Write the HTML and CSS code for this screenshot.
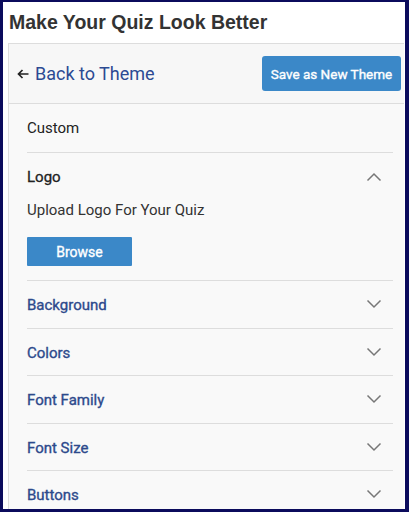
FILE: index.html
```html
<!DOCTYPE html>
<html>
<head>
<meta charset="utf-8">
<link rel="stylesheet" href="styles.css">
</head>
<body>
<div class="frame">
  <h1 class="title">Make Your Quiz Look Better</h1>
  <div class="panel">
    <div class="panel-head">
      <a class="back"><svg class="arrow" width="12" height="10" viewBox="0 0 12 10"><path d="M11.5 5 H1.5 M5.5 1 L1.5 5 L5.5 9" fill="none" stroke="#222" stroke-width="1.7"/></svg>Back to Theme</a>
      <button class="btn save">Save as New Theme</button>
    </div>
    <div class="panel-body">
      <div class="custom">Custom</div>
      <div class="section open">
        <div class="row">
          <span class="label dark">Logo</span>
          <svg class="chev" width="16" height="10" viewBox="0 0 16 10"><path d="M1.5 8.5 L8 2 L14.5 8.5" fill="none" stroke="#777" stroke-width="1.5"/></svg>
        </div>
        <div class="upload">Upload Logo For Your Quiz</div>
        <button class="btn browse">Browse</button>
      </div>
      <div class="section">
        <div class="row"><span class="label">Background</span><svg class="chev" width="16" height="10" viewBox="0 0 16 10"><path d="M1.5 1.5 L8 8 L14.5 1.5" fill="none" stroke="#777" stroke-width="1.5"/></svg></div>
      </div>
      <div class="section">
        <div class="row"><span class="label">Colors</span><svg class="chev" width="16" height="10" viewBox="0 0 16 10"><path d="M1.5 1.5 L8 8 L14.5 1.5" fill="none" stroke="#777" stroke-width="1.5"/></svg></div>
      </div>
      <div class="section">
        <div class="row"><span class="label">Font Family</span><svg class="chev" width="16" height="10" viewBox="0 0 16 10"><path d="M1.5 1.5 L8 8 L14.5 1.5" fill="none" stroke="#777" stroke-width="1.5"/></svg></div>
      </div>
      <div class="section">
        <div class="row"><span class="label">Font Size</span><svg class="chev" width="16" height="10" viewBox="0 0 16 10"><path d="M1.5 1.5 L8 8 L14.5 1.5" fill="none" stroke="#777" stroke-width="1.5"/></svg></div>
      </div>
      <div class="section">
        <div class="row"><span class="label">Buttons</span><svg class="chev" width="16" height="10" viewBox="0 0 16 10"><path d="M1.5 1.5 L8 8 L14.5 1.5" fill="none" stroke="#777" stroke-width="1.5"/></svg></div>
      </div>
    </div>
  </div>
</div>
</body>
</html>
```
FILE: styles.css
```css
html, body {
  margin: 0;
  padding: 0;
  background: #0b0b5c;
}
.frame {
  box-sizing: border-box;
  width: 409px;
  height: 512px;
  border-style: solid;
  border-color: #0b0b5c;
  border-width: 2px 4px 3px 3px;
  background: #ffffff;
  overflow: hidden;
  font-family: Roboto, "Liberation Sans", sans-serif;
}
.title {
  margin: 0;
  padding: 9px 0 0 6px;
  height: 41px;
  box-sizing: border-box;
  font-family: "Liberation Sans", Arial, sans-serif;
  font-weight: bold;
  font-size: 19.5px;
  line-height: 22px;
  color: #333333;
}
.panel {
  margin-left: 5px;
  margin-right: 1px;
  border: 1px solid #dddddd;
  border-right: none;
  background: #f9f9f9;
}
.panel-head {
  display: flex;
  align-items: center;
  justify-content: space-between;
  height: 59px;
  padding: 0 3px 0 8px;
  background: #f7f7f7;
  border-bottom: 1px solid #dddddd;
}
.back {
  font-size: 18px;
  color: #2c4a93;
  display: flex;
  align-items: center;
}
.arrow {
  display: block;
  margin-right: 6px;
}
.btn {
  border: none;
  background: #3b88c8;
  color: #ffffff;
  font-family: Roboto, "Liberation Sans", sans-serif;
  font-weight: 400;
  -webkit-text-stroke: 0.35px #ffffff;
  padding: 0;
  cursor: pointer;
}
.save {
  width: 139px;
  height: 35px;
  border-radius: 3px;
  font-size: 13.5px;
}
.panel-body {
  padding: 0 11px 0 18px;
}
.custom {
  height: 48px;
  line-height: 48px;
  font-size: 15px;
  color: #222222;
  border-bottom: 1px solid #dddddd;
}
.section {
  border-bottom: 1px solid #dddddd;
}
.row {
  display: flex;
  align-items: center;
  justify-content: space-between;
  height: 46.5px;
  padding-right: 11px;
}
.open .row {
  height: 48px;
}
.label {
  font-size: 15px;
  font-weight: 400;
  -webkit-text-stroke: 0.35px #2d4a8c;
  color: #2d4a8c;
  padding-top: 2px;
}
.label.dark {
  color: #222222;
  -webkit-text-stroke: 0.3px #222222;
  padding-top: 0;
}
.chev {
  display: block;
}
.upload {
  font-size: 15px;
  color: #333333;
  line-height: 18px;
}
.browse {
  display: block;
  width: 105px;
  height: 29px;
  margin: 18px 0 14px 0;
  border-radius: 1px;
  font-size: 14px;
}
```
